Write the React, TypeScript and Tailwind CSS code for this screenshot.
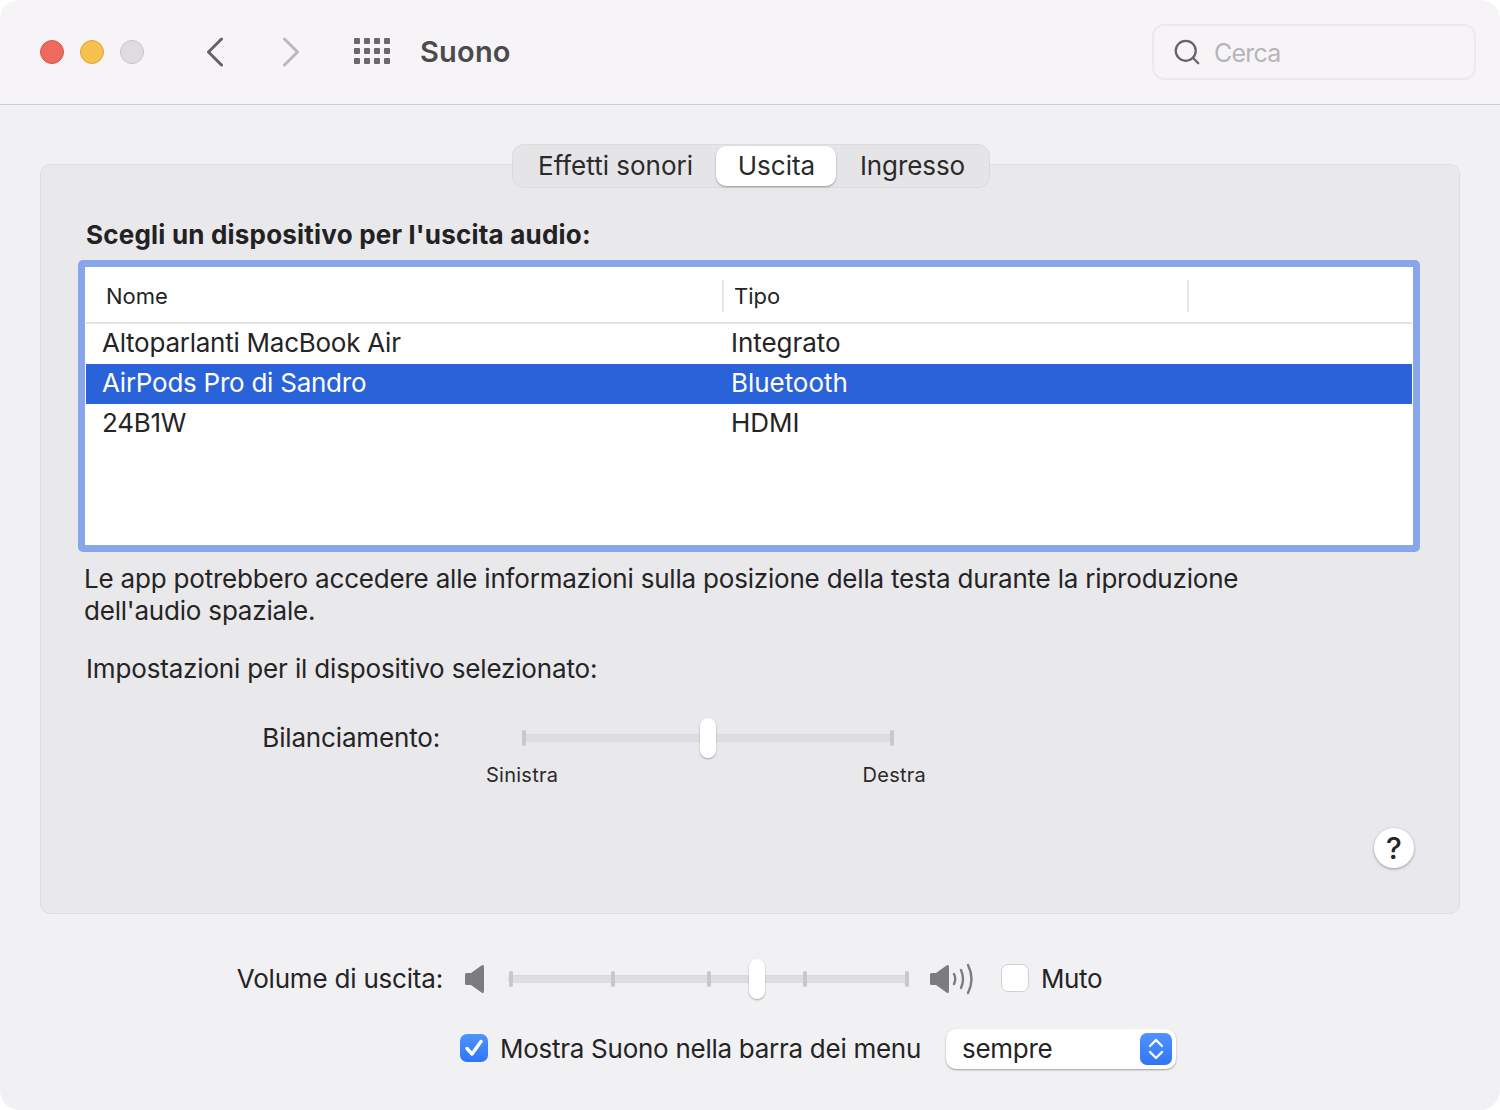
import { Search } from 'lucide-react';

const ROWS = [
  { name: 'Altoparlanti MacBook Air', type: 'Integrato', selected: false },
  { name: 'AirPods Pro di Sandro', type: 'Bluetooth', selected: true },
  { name: '24B1W', type: 'HDMI', selected: false },
];

function Slider({ ticks, thumbAt, className }: { ticks: number[]; thumbAt: number; className: string }) {
  return (
    <div className={`relative h-[8px] rounded-full bg-[#dfdddf] border border-[#dcdadd] ${className}`}>
      {ticks.map((t) => (
        <div key={t} className="absolute top-[-5px] h-[16px] w-[4px] rounded-[2px] bg-[#c9c7ca]" style={{ left: t }} />
      ))}
      <div
        className="absolute top-[-17px] h-[40px] w-[16px] rounded-full bg-white shadow-[0_1px_2px_rgba(0,0,0,0.3)]"
        style={{ left: thumbAt }}
      />
    </div>
  );
}

function SpeakerCone() {
  return <path d="M1 10.5 Q1 9 2.5 9 L7 9 L17.5 1.5 Q20 0 20 3 L20 27 Q20 30 17.5 28.5 L7 21 L2.5 21 Q1 21 1 19.5 Z" fill="#7d7b7e" />;
}

export default function App() {
  return (
    <div className="w-[1500px] h-[1110px] bg-white font-['Inter',sans-serif] text-[#252425]">
      <div className="h-full rounded-[20px] overflow-hidden bg-[#f1f0f3]">
        {/* Toolbar */}
        <div className="h-[105px] bg-[#f7f4f8] border-b border-[#cfcdd0] flex items-center pl-[40px] pr-[24px] pb-[1px]">
          <div className="flex gap-[16px]">
            <div className="w-[24px] h-[24px] rounded-full bg-[#ee6a5f] border border-[#d5554a]" />
            <div className="w-[24px] h-[24px] rounded-full bg-[#f6c14f] border border-[#dea63c]" />
            <div className="w-[24px] h-[24px] rounded-full bg-[#dfdcdf] border border-[#c8c5c8]" />
          </div>
          <svg className="ml-[62px]" width="18" height="30" viewBox="0 0 18 30" fill="none" stroke="#646265" strokeWidth="3" strokeLinecap="round" strokeLinejoin="round">
            <path d="M15.5 2 L2.5 15 L15.5 28" />
          </svg>
          <svg className="ml-[58px]" width="18" height="30" viewBox="0 0 18 30" fill="none" stroke="#bab8bb" strokeWidth="3" strokeLinecap="round" strokeLinejoin="round">
            <path d="M2.5 2 L15.5 15 L2.5 28" />
          </svg>
          <svg className="ml-[54px]" width="36" height="27" viewBox="0 0 36 27" fill="#6a686b">
            {[0, 10, 20].map((y) =>
              [0, 10, 20, 30].map((x) => <rect key={`${x}-${y}`} x={x} y={y} width="6" height="6" rx="1" />)
            )}
          </svg>
          <span className="ml-[30px] text-[29px] font-semibold text-[#4c4a4c] tracking-[0.2px]">Suono</span>
          <div className="ml-auto w-[324px] h-[56px] rounded-[12px] border-2 border-[#ece9ee] flex items-center pl-[18px]">
            <Search className="w-[30px] h-[30px] text-[#656366]" strokeWidth={1.8} />
            <span className="ml-[12px] mt-[4px] text-[25px] tracking-[-0.8px] text-[#b7b5b8]">Cerca</span>
          </div>
        </div>

        {/* Tab panel */}
        <div className="px-[40px] pt-[59px]">
          <div className="h-[750px] rounded-[10px] bg-[#e9e8eb] border border-[#dfdde0]">
            <div className="flex justify-center -mt-[21px] pl-[2px]">
              <div className="w-[478px] h-[44px] rounded-[12px] bg-[#e5e4e7] border border-[#dcdadd] flex items-center text-[26px] text-[#2b2a2b]">
                <span className="w-[203px] pl-[2px] pb-[2px] text-center">Effetti sonori</span>
                <span className="w-[120px] h-[40px] rounded-[10px] bg-white shadow-[0_1px_2px_rgba(0,0,0,0.35)] flex items-center justify-center pb-[2px] pl-[1px]">Uscita</span>
                <span className="flex-1 pb-[2px] text-center tracking-[-0.1px]">Ingresso</span>
              </div>
            </div>

            <div className="pl-[37px] pr-[39px]">
              <div className="pl-[8px] mt-[27px] h-[38px] flex items-center text-[26px] font-bold tracking-[0.2px] text-[#232223]">
                Scegli un dispositivo per l'uscita audio:
              </div>

              {/* Device table */}
              <div className="mt-[7px] h-[292px] rounded-[5px] border-[7px] border-[#88a6ec]">
                <div className="h-full bg-white border border-white">
                  <div className="h-[56px] border-b-2 border-[#e4e4e4] flex items-center text-[22px] pt-[2px]">
                    <span className="w-[638px] h-[32px] pl-[20px] border-r-2 border-[#e6e6e6] flex items-center">Nome</span>
                    <span className="w-[465px] h-[32px] pl-[10px] border-r-2 border-[#e6e6e6] flex items-center">Tipo</span>
                  </div>
                  {ROWS.map((row) => (
                    <div
                      key={row.name}
                      className={`h-[40px] flex items-center text-[26px] pl-[16px] pb-[4px] ${row.selected ? 'bg-[#2962d9] text-white' : ''}`}
                    >
                      <span className="w-[629px] tracking-[-0.25px]">{row.name}</span>
                      <span className="tracking-[-0.05px]">{row.type}</span>
                    </div>
                  ))}
                </div>
              </div>

              <p className="mt-[11px] pl-[6px] w-[1200px] text-[26px] leading-[32px] tracking-[-0.2px]">
                Le app potrebbero accedere alle informazioni sulla posizione della testa durante la riproduzione dell'audio spaziale.
              </p>
              <p className="mt-[26px] pl-[8px] text-[26px] leading-[32px] tracking-[-0.16px]">
                Impostazioni per il dispositivo selezionato:
              </p>

              {/* Balance */}
              <div className="mt-[37px] flex items-center">
                <span className="w-[362px] text-right text-[26px] leading-[32px] tracking-[-0.16px]">Bilanciamento:</span>
                <Slider ticks={[-1, 367]} thumbAt={177} className="ml-[82px] w-[372px]" />
              </div>
              <div className="mt-[9px] flex w-[848px] justify-between pl-[408px] text-[20px] leading-[24px] text-[#2b2a2b] tracking-[0.25px]">
                <span>Sinistra</span>
                <span>Destra</span>
              </div>

              <div className="mt-[41px] flex justify-end pr-[6px]">
                <div className="w-[40px] h-[40px] rounded-full bg-white shadow-[0_1px_3px_rgba(0,0,0,0.35)] flex items-center justify-center text-[30px] font-medium">?</div>
              </div>
            </div>
          </div>

          {/* Output volume */}
          <div className="mt-[49px] h-[32px] flex items-center">
            <span className="w-[403px] pb-[2px] text-right text-[26px] tracking-[-0.2px]">Volume di uscita:</span>
            <svg className="ml-[21px]" width="21" height="30" viewBox="0 0 21 30"><SpeakerCone /></svg>
            <Slider ticks={[0, 102, 198, 294, 396]} thumbAt={240} className="ml-[23px] w-[401px]" />
            <svg className="ml-[20px]" width="45" height="32" viewBox="0 0 45 32">
              <g transform="translate(0 1)"><SpeakerCone /></g>
              <g fill="none" stroke="#7d7b7e" strokeWidth="2.4" strokeLinecap="round">
                <path d="M25 11 Q27.5 16 25 21" />
                <path d="M32 7 Q36 16 32 25" />
                <path d="M39 2 Q46 16 39 30" />
              </g>
            </svg>
            <div className="ml-[27px] mb-[2px] w-[28px] h-[28px] rounded-[7px] bg-white border border-[#d0ced1]" />
            <span className="ml-[12px] pb-[2px] text-[26px] tracking-[-0.4px]">Muto</span>
          </div>

          {/* Menu bar option */}
          <div className="mt-[34px] h-[40px] flex items-center pl-[420px]">
            <div className="mb-[2px] w-[28px] h-[28px] rounded-[7px] bg-gradient-to-b from-[#4f93fb] to-[#2f75f6] flex items-center justify-center">
              <svg width="20" height="18" viewBox="0 0 20 18" fill="none" stroke="#fff" strokeWidth="3.4" strokeLinecap="round" strokeLinejoin="round">
                <path d="M3 9.5 L8 15 L17 2.5" />
              </svg>
            </div>
            <span className="ml-[12px] pb-[2px] text-[26px] tracking-[-0.27px]">Mostra Suono nella barra dei menu</span>
            <div className="ml-auto mr-[284px] w-[230px] h-[40px] rounded-[10px] bg-white shadow-[0_1px_2px_rgba(0,0,0,0.35)] flex items-center pl-[16px] pr-[4px] text-[26px] tracking-[-0.3px]">
              <span className="pb-[2px]">sempre</span>
              <div className="ml-auto w-[32px] h-[32px] rounded-[7px] bg-gradient-to-b from-[#4f93fb] to-[#2f75f6] flex items-center justify-center">
                <svg width="18" height="24" viewBox="0 0 18 24" fill="none" stroke="#fff" strokeWidth="2.4" strokeLinecap="round" strokeLinejoin="round">
                  <path d="M3 9 L9 3 L15 9" />
                  <path d="M3 15 L9 21 L15 15" />
                </svg>
              </div>
            </div>
          </div>
        </div>
      </div>
    </div>
  );
}
